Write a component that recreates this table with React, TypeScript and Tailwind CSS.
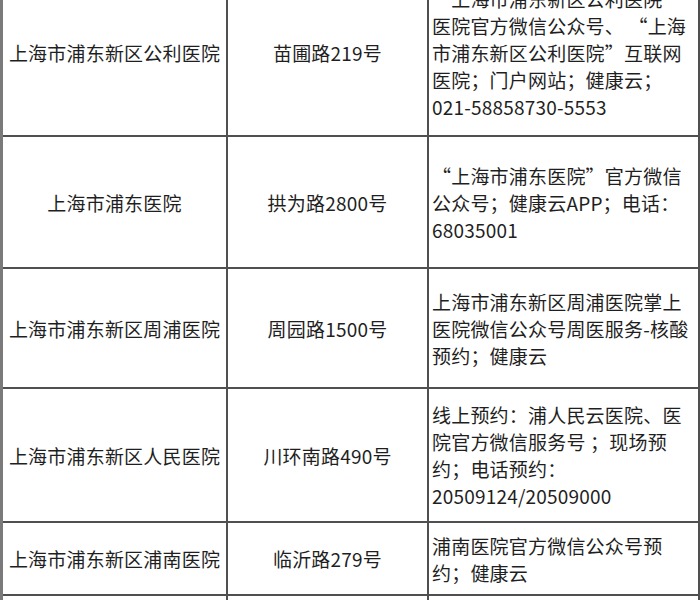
const rows: { name: string; addr: string; info: string[]; h: string }[] = [
  {
    name: "上海市浦东新区公利医院",
    addr: "苗圃路219号",
    info: [
      "“上海市浦东新区公利医院”",
      "医院官方微信公众号、 “上海",
      "市浦东新区公利医院”互联网",
      "医院；门户网站；健康云；",
      "021-58858730-5553",
    ],
    h: "h-[167px]",
  },
  {
    name: "上海市浦东医院",
    addr: "拱为路2800号",
    info: ["“上海市浦东医院”官方微信", "公众号；健康云APP；电话：", "68035001"],
    h: "h-[132px]",
  },
  {
    name: "上海市浦东新区周浦医院",
    addr: "周园路1500号",
    info: ["上海市浦东新区周浦医院掌上", "医院微信公众号周医服务-核酸", "预约；健康云"],
    h: "h-[120px]",
  },
  {
    name: "上海市浦东新区人民医院",
    addr: "川环南路490号",
    info: ["线上预约：浦人民云医院、医", "院官方微信服务号 ；现场预", "约；电话预约：", "20509124/20509000"],
    h: "h-[134px]",
  },
  {
    name: "上海市浦东新区浦南医院",
    addr: "临沂路279号",
    info: ["浦南医院官方微信公众号预", "约；健康云"],
    h: "h-[73px]",
  },
  { name: "", addr: "", info: [], h: "h-[60px]" },
];

export default function App() {
  return (
    <div
      className="w-[700px] h-[600px] overflow-hidden bg-white text-[#1f1f1f] text-[19px] leading-[27px] tracking-[0.2px]"
      style={{ fontFamily: '"Noto Sans CJK SC", "Noto Sans", sans-serif' }}
    >
      {/* table is scrolled up a bit: top of the first row is out of view */}
      <div className="-mt-[30px] border-l-[3px] border-[#7a7a7a]">
        {rows.map((r, i) => (
          <div key={i} className={`flex border-b-2 border-[#505050] ${r.h}`}>
            <div className="w-[225px] shrink-0 border-r-2 border-[#505050] flex items-center justify-center whitespace-nowrap">
              {r.name}
            </div>
            <div className="w-[201px] shrink-0 border-r-2 border-[#505050] flex items-center justify-center whitespace-nowrap">
              {r.addr}
            </div>
            <div className="flex-1 border-r-2 border-[#505050] flex flex-col justify-center pl-[3px] whitespace-nowrap">
              {r.info.map((l, j) => (
                <div key={j}>{l}</div>
              ))}
            </div>
          </div>
        ))}
      </div>
    </div>
  );
}
